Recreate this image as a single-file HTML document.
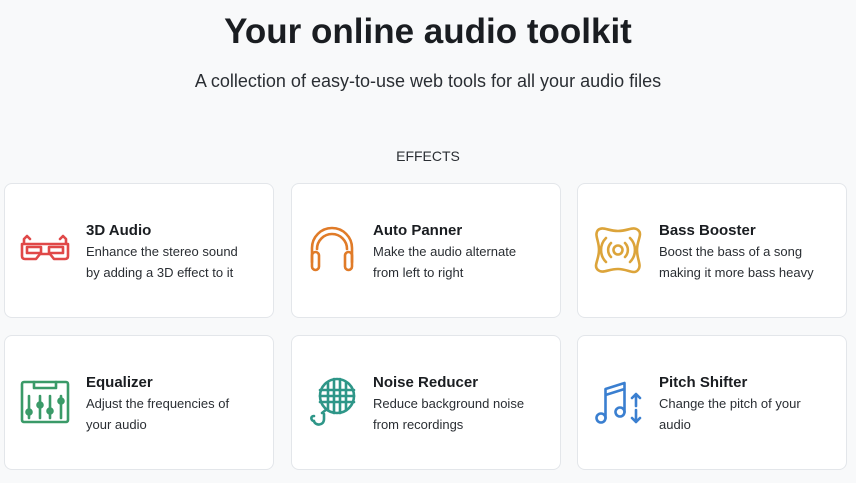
<!DOCTYPE html>
<html><head><style>
*{margin:0;padding:0;box-sizing:border-box}
body{width:856px;height:483px;background:#f8f9fa;font-family:"Liberation Sans",sans-serif;color:#1f2329;position:relative;overflow:hidden}
h1{position:absolute;top:12px;left:0;width:856px;text-align:center;font-size:35px;font-weight:bold;color:#1a1d21}
.sub{position:absolute;top:71px;left:0;width:856px;text-align:center;font-size:18px;color:#2a2e33}
.eff{position:absolute;top:148px;left:0;width:856px;text-align:center;font-size:14px;color:#2a2e33}
.card{position:absolute;width:270px;height:135px;background:#fff;border:1px solid #e3e6ea;border-radius:8px}
.card svg{position:absolute;left:14px;top:40px;width:52px;height:52px;fill:none;stroke-width:2.6;stroke-linecap:round;stroke-linejoin:round}
.t{position:absolute;left:81px;top:38px;font-size:15px;font-weight:bold;color:#1a1d21}
.d{position:absolute;left:81px;top:57px;font-size:13px;line-height:21px;color:#2a2e33;width:168px}
</style></head><body>
<h1>Your online audio toolkit</h1>
<div class="sub">A collection of easy-to-use web tools for all your audio files</div>
<div class="eff">EFFECTS</div>

<div class="card" style="left:4px;top:183px">
<svg viewBox="0 0 52 52" stroke="#e04848"><path d="M5 20v-5l3-3 3 3M47 20v-5l-3-3-3 3M3 20h46v12c0 2-1 3-3 3H35l-4-5h-10l-4 5H6c-2 0-3-1-3-3z"/><rect x="8" y="23" width="14" height="6"/><rect x="30" y="23" width="14" height="6"/></svg>
<div class="t">3D Audio</div><div class="d">Enhance the stereo sound by adding a 3D effect to it</div></div>

<div class="card" style="left:291px;top:183px">
<svg viewBox="0 0 52 52" stroke="#e07b28"><path d="M6 38V24a20 20 0 0 1 40 0v14"/><path d="M11 25a15 15 0 0 1 30 0"/><rect x="6" y="28" width="7" height="18" rx="3.5"/><rect x="39" y="28" width="7" height="18" rx="3.5"/></svg>
<div class="t">Auto Panner</div><div class="d">Make the audio alternate from left to right</div></div>

<div class="card" style="left:577px;top:183px">
<svg viewBox="0 0 52 52" stroke="#dca43a"><path d="M6 6c5-4 10 1 20 1s15-5 20-1 -1 10-1 20 5 15 1 20-10-1-20-1-15 5-20 1 1-10 1-20-5-15-1-20z"/><circle cx="26" cy="26" r="4.5"/><path d="M19 19a10 10 0 0 0 0 14M33 19a10 10 0 0 1 0 14M14 14a17 17 0 0 0 0 24M38 14a17 17 0 0 1 0 24"/></svg>
<div class="t">Bass Booster</div><div class="d">Boost the bass of a song making it more bass heavy</div></div>

<div class="card" style="left:4px;top:335px">
<svg viewBox="0 0 52 52" stroke="#3a9a68"><rect x="3" y="6" width="46" height="40" rx="2"/><path d="M15 6v6h22V6M10 20v22M21 20v22M31 20v22M42 20v22"/><circle cx="10" cy="36" r="2.5"/><circle cx="21" cy="29" r="2.5"/><circle cx="31" cy="35" r="2.5"/><circle cx="42" cy="25" r="2.5"/></svg>
<div class="t">Equalizer</div><div class="d">Adjust the frequencies of your audio</div></div>

<div class="card" style="left:291px;top:335px">
<svg viewBox="0 0 52 52" stroke="#2e9688"><circle cx="31" cy="20" r="17"/><path d="M14 14h34M14 20h34M14 26h34M22 6v28M28 3v34M34 3v34M40 6v28M21 33l-5 4M8 45c1 5 10 5 10-2v-5M8 45c-3 0-4-5 0-5"/></svg>
<div class="t">Noise Reducer</div><div class="d">Reduce background noise from recordings</div></div>

<div class="card" style="left:577px;top:335px">
<svg viewBox="0 0 52 52" stroke="#3a7fd0"><circle cx="9" cy="42" r="4.5"/><circle cx="28" cy="36" r="4.5"/><path d="M13.5 42V13l19-6v29M13.5 19l19-6M44 30V18M40 22l4-4 4 4M44 34v12M40 42l4 4 4-4"/></svg>
<div class="t">Pitch Shifter</div><div class="d">Change the pitch of your audio</div></div>
</body></html>
